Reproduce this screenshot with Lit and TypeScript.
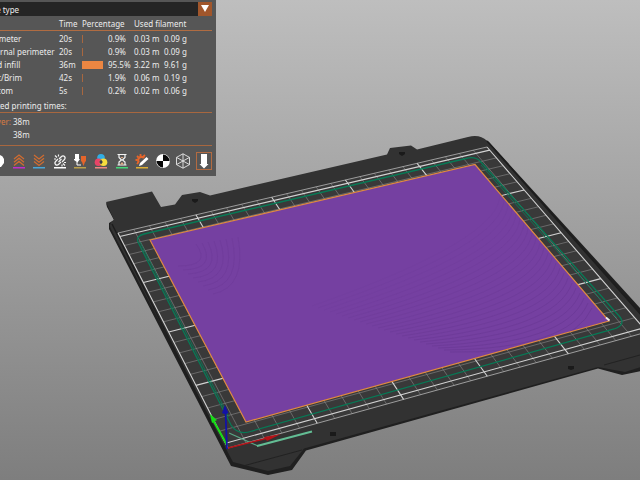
import { LitElement, css, html, svg } from "lit";
import { customElement, state } from "lit/decorators.js";

type Point = [number, number];

// Print bed in millimetres, projected on the 640 x 480 viewport of the scene.
const BED = { x0: 0, x1: 250, y0: -4, y1: 204 };

function project(x: number, y: number): Point {
  const u = (x - BED.x0) / (BED.x1 - BED.x0);
  const v = (y - BED.y0) / (BED.y1 - BED.y0);
  const [ax, ay] = [228, 448];
  const [bx, by] = [647, 332];
  const [cx, cy] = [487, 147];
  const [dx, dy] = [118, 233];
  const sx = ax - bx + cx - dx;
  const sy = ay - by + cy - dy;
  const den = (bx - cx) * (dy - cy) - (dx - cx) * (by - cy);
  const g = (sx * (dy - cy) - (dx - cx) * sy) / den;
  const h = ((bx - cx) * sy - sx * (by - cy)) / den;
  const w = 1 + g * u + h * v;
  return [
    (ax + (bx - ax + g * bx) * u + (dx - ax + h * dx) * v) / w,
    (ay + (by - ay + g * by) * u + (dy - ay + h * dy) * v) / w,
  ];
}

function segment(x0: number, y0: number, x1: number, y1: number): string {
  const a = project(x0, y0);
  const b = project(x1, y1);
  return `M${a[0].toFixed(1)} ${a[1].toFixed(1)}L${b[0].toFixed(1)} ${b[1].toFixed(1)}`;
}

function gridPaths() {
  let thin = "";
  let bold = "";
  for (let x = 0; x <= 250; x += 10) {
    const line = segment(x, BED.y0, x, BED.y1);
    if (x % 50 === 0) bold += line;
    else thin += line;
  }
  for (let y = 0; y <= 200; y += 10) {
    const line = segment(0, y, 250, y);
    if (y % 50 === 0) bold += line;
    else thin += line;
  }
  const outline = segment(0, BED.y1, 250, BED.y1) + segment(0, BED.y0, 250, BED.y0);
  return { thin, bold, outline };
}

@customElement("bed-scene")
class BedScene extends LitElement {
  static styles = css`
    :host { display: block; height: 100%; }
    .scene { display: block; width: 100%; height: 100%; }
  `;

  render() {
    const grid = gridPaths();
    const front = Array.from({ length: 24 }, (_, i) => i);
    const back = Array.from({ length: 8 }, (_, i) => i);
    return html`
      <svg class="scene" viewBox="0 0 640 480" preserveAspectRatio="xMidYMid slice" role="img" aria-label="Print bed">
        <defs>
          <linearGradient id="sky" x1="0" y1="0" x2="0" y2="1">
            <stop offset="0" stop-color="#bebebe" />
            <stop offset="1" stop-color="#7e7e7e" />
          </linearGradient>
          <clipPath id="part"><path d="M150 240L475 164.500L609 321L246 422Z" /></clipPath>
        </defs>
        <rect width="640" height="480" fill="url(#sky)" />
        <path fill="#202020" d="M106 203L107 207L114 220L109 223V229L231 466L268 475L292 470L306 450.500L598 368.500L622 375L660 367V330L489 142L484 139L300 300Z" />
        <path fill="#323232" d="M106 202L152 191.500L161 207L175 204.500L182 195L200 192L210 195.500L387 154.500L390 148L411 145.500L417 149.500L468 137Q480 134 487 141L660 336V361L625 372L598 367L304 448.500L290 466L268 471L233 462L111 229Q108 224 114 220Z" />
        <path fill="#393939" d="M118 233L487 147L647 332L228 448Z" />
        <path fill="none" stroke="#222" d="M243 466L302 450M604 365L640 355" />
        <path fill="none" stroke="#1e1e1e" stroke-width="1.500" d="M112 224L229 459M487 141L650 325" />
        <g fill="#1a1a1a">
          <path d="M192 199h6v2l-3 2-3-2zM399 152h6v2l-3 2-3-2zM330 432h6v4h-6zM568 366h6v3l-3 1-3-1z" />
        </g>
        <g fill="none">
          <path d=${grid.thin} stroke="#8a8a8a" stroke-width=".6" />
          <path d=${grid.outline} stroke="#a8a8a8" stroke-width=".9" />
          <path d=${grid.bold} stroke="#d2d2d2" stroke-width="1.100" />
          <path stroke="#077a56" stroke-width="1.300" d="M138 242Q136 236 144 234L466 158.500Q475 156 480 161L620 317Q626 325 614 329L252 431Q238 436 231 425Z" />
          <path stroke="#087b58" stroke-width=".9" d="M140 242L229 417M481 165L617 318" />
        </g>
        <path fill="#7540a1" d="M150 240L475 164.500L609 321L246 422Z" />
        <g fill="none" clip-path="url(#part)" stroke="#64348e" stroke-width=".8">
          ${front.map((i) => svg`<path opacity=${(0.6 - i * 0.022).toFixed(2)} d=${`M${450 - i * 6} ${352 - i * 2}Q${572 - i * 3} ${354 - i * 5} ${592 - i * 4} ${308 - i * 5}`} />`)}
          ${back.map((i) => svg`<path opacity=".3" d=${`M${178 + i * 5} ${266 + i * 4}Q${212 + i * 5} ${266 + i * 3} ${196 + i * 6} ${244 - i}`} />`)}
        </g>
        <path fill="none" stroke="#e08a42" stroke-width="1.200" d="M150 240L475 164.500L609 321L246 422Z" />
        <path stroke="#eee" stroke-width="1.800" d="M606 317.500L609.500 320.500" />
        <path fill="none" stroke="#58a685" stroke-width="1.200" d="M229 433L258 446" />
        <path fill="none" stroke="#63bd94" stroke-width="2.200" d="M257 446L312 431.500" />
        <path stroke="#b51217" stroke-width="1.500" d="M228 448L268 438" />
        <path fill="#b51217" d="M264 437L281 434L267 441Z" />
        <path stroke="#16dd16" stroke-width="2" d="M227 445L213 420" />
        <path fill="#16dd16" d="M210 414L217 420L212 423Z" />
        <path stroke="#1212a8" stroke-width="1.800" d="M227 449L225.500 412" />
        <path fill="#1212a8" d="M225 405L228.500 413Q225 415 222 413Z" />
      </svg>
    `;
  }
}

interface Feature {
  name: string;
  time: string;
  percent: number;
  length: string;
  weight: string;
}

const FEATURES: Feature[] = [
  { name: "Perimeter", time: "20s", percent: 0.9, length: "0.03 m", weight: "0.09 g" },
  { name: "External perimeter", time: "20s", percent: 0.9, length: "0.03 m", weight: "0.09 g" },
  { name: "Solid infill", time: "36m", percent: 95.5, length: "3.22 m", weight: "9.61 g" },
  { name: "Skirt/Brim", time: "42s", percent: 1.9, length: "0.06 m", weight: "0.19 g" },
  { name: "Custom", time: "5s", percent: 0.2, length: "0.02 m", weight: "0.06 g" },
];

const TOOLS = [
  { name: "Wipe", art: svg`<path fill="#d76a2f" d="M4 5h6v7H4z" /><path fill="#fff" d="M7 2q5-1 7 4v4l-3 4H9l1-5-3-3z" />` },
  { name: "Retractions", art: svg`<path fill="none" stroke="#cf6c31" stroke-width="1.300" d="M3 6l5-4 5 4M3 9.200l5-4 5 4M3 12.400l5-4 5 4" /><path fill="#c32dcb" d="M2 14h12v1.500H2z" />` },
  { name: "Deretractions", art: svg`<path fill="none" stroke="#cf6c31" stroke-width="1.300" d="M3 2l5 4 5-4M3 5.200l5 4 5-4M3 8.400l5 4 5-4" /><path fill="#4aa7d8" d="M2 14h12v1.500H2z" />` },
  { name: "Seams", art: svg`<g fill="none" stroke="#f4f4f4" stroke-width="1.200"><path d="M7 6l2-2q2-2 3.500-.5T12 7l-2 2M9 9l-2 2q-2 2-3.500.5T4 8l2-2M5 4.500L3 2.500M6.500 3.500v-2M4 6H2M11 10.500l2 2M10 11.500v2M12 9.500h2M6.500 9l3-3" /></g><path fill="#fff" d="M2 14h12v1.500H2z" />` },
  { name: "Tool changes", art: svg`<path fill="#fff" d="M3 1h4v5h1L5.500 9.500 2 7V6h1z" /><path fill="#e5652b" d="M9 3h5v5l-1 1-1.500 4L10 9 9 8z" /><path fill="none" stroke="#fff" d="M5 9v3h4" /><path fill="#bba04b" d="M2 14h12v1.500H2z" />` },
  { name: "Color changes", art: svg`<circle cx="8" cy="4.800" r="3.800" fill="#31aee5" /><circle cx="5.500" cy="9.200" r="3.800" fill="#e84468" /><circle cx="10.500" cy="9.200" r="3.800" fill="#f5dc3d" /><path fill="#3b3d49" d="M8 6.500L9.800 9 8 11.500 6.200 9z" /><path fill="#ee8881" d="M2 14h12v1.500H2z" />` },
  { name: "Pauses", art: svg`<path fill="none" stroke="#f4f4f4" stroke-width="1.200" d="M3.500 1.500h9M3.500 12h9M5 2v2.500L7.500 7 5 9v3M11 2v2.500L8.500 7 11 9v3" /><path fill="#e4ab84" d="M6 11.500l2-2.500 2 2.500zM6.500 4h3L8 5.500z" /><path fill="#43d878" d="M2 14h12v1.500H2z" />` },
  { name: "Custom G-codes", art: svg`<path fill="none" stroke="#e5652b" stroke-width="2.200" d="M5 9.500a3.200 3.200 0 1 1 5-4.500" /><path stroke="#e5652b" stroke-width="1.800" d="M6.500 3.500V1M9 4l2-2M4.500 4.500L3 3M3.500 7h-2M4.500 9L3 11" /><path fill="#fff" d="M12.500 4l2 2-6.500 6-3 1 1-3z" /><path fill="#dcae35" d="M2 14h12v1.500H2z" />` },
  { name: "Center of gravity", art: svg`<circle cx="8" cy="8" r="6.900" fill="#fff" /><path fill="#080808" d="M8 8V1.500A6.500 6.500 0 0 1 14.500 8zM8 8v6.500A6.500 6.500 0 0 1 1.500 8z" />` },
  { name: "Shells", art: svg`<path fill="none" stroke="#e8e8e8" stroke-width=".9" d="M8 .8l6.500 3.600v7.200L8 15.200 1.500 11.600V4.400zM8 .8V8M1.500 4.400L8 8l6.500-3.600M8 8v7.200M1.500 11.600L8 8l6.500 3.600" />` },
  { name: "Tool marker", art: svg`<path fill="#fff" d="M5 1h6v10h1.500L8 15.500 3.500 11H5z" />` },
];

@customElement("legend-panel")
class LegendPanel extends LitElement {
  static styles = css`
    :host {
      display: block;
      box-sizing: border-box;
      padding: 2px 4px 6px;
      background: #565656;
      color: #ececec;
      font: 8px/13px "Noto Sans", "Open Sans", sans-serif;
    }
    .view { display: flex; height: 14px; margin-bottom: 1px; background: #252525; }
    .view-select {
      flex: 1;
      appearance: none;
      border: 0;
      padding: 0;
      background: none;
      color: inherit;
      font: inherit;
    }
    .view-arrow { width: 14px; height: 14px; background: #a1562b; pointer-events: none; margin-left: -14px; }
    .features { width: 100%; table-layout: fixed; border-collapse: collapse; }
    .features th, .features td { padding: 0; height: 13px; text-align: left; font-weight: 400; white-space: nowrap; }
    .features thead tr { border-bottom: 1px solid #b06c42; }
    .features tbody th { padding-left: 12px; }
    .features tbody::before { content: ""; display: block; height: 1px; }
    .col-name { width: 87px; }
    .col-time { width: 23px; }
    .col-share { width: 52px; }
    .col-length { width: 30px; }
    .share { display: flex; align-items: center; }
    .track { width: 22px; margin-right: 4px; }
    .bar { height: 8px; min-width: 1px; background: #eb8642; }
    .bar.slim { background: #a8673f; }
    .caption { margin: 2px 0 0; border-bottom: 1px solid #a8673f; }
    .times { display: grid; grid-template-columns: 41px 1fr; margin: 2px 0; padding-bottom: 4px; border-bottom: 1px solid #a8673f; }
    .times dt { color: #d77b42; white-space: nowrap; }
    .times dd { margin: 0; }
    .tools { display: flex; justify-content: space-between; margin-top: 4px; padding-top: 2px; padding-left: 18px; }
    .tool { width: 16px; height: 18px; padding: 0; border: 1px solid transparent; background: none; }
    .tool.on { border-color: #b36b41; }
    .tool-art { display: block; width: 16px; height: 16px; margin-left: -1px; }
  `;

  @state() private active = "Tool marker";

  render() {
    return html`
      <div class="view">
        <select class="view-select" aria-label="View"><option>Feature type</option></select>
        <svg class="view-arrow" viewBox="0 0 14 14" aria-hidden="true"><path fill="#fff" d="M3 3h8l-4 7z" /></svg>
      </div>
      <table class="features">
        <colgroup>
          <col class="col-name" /><col class="col-time" /><col class="col-share" /><col class="col-length" /><col />
        </colgroup>
        <thead>
          <tr><th></th><th>Time</th><th>Percentage</th><th colspan="2">Used filament</th></tr>
        </thead>
        <tbody>
          ${FEATURES.map((f) => html`
            <tr>
              <th scope="row">${f.name}</th>
              <td>${f.time}</td>
              <td>
                <div class="share">
                  <div class="track">
                    <div class=${f.percent < 5 ? "bar slim" : "bar"} style="width:${f.percent}%"></div>
                  </div>
                  ${f.percent.toFixed(1)}%
                </div>
              </td>
              <td>${f.length}</td>
              <td>${f.weight}</td>
            </tr>
          `)}
        </tbody>
      </table>
      <p class="caption">Estimated printing times:</p>
      <dl class="times">
        <dt>First layer:</dt><dd>38m</dd>
        <dt>Total:</dt><dd>38m</dd>
      </dl>
      <div class="tools">
        ${TOOLS.map((t) => html`
          <button class=${t.name === this.active ? "tool on" : "tool"} aria-label=${t.name} @click=${() => (this.active = t.name)}>
            <svg class="tool-art" viewBox="0 0 16 16" aria-hidden="true">${t.art}</svg>
          </button>
        `)}
      </div>
    `;
  }
}

@customElement("app-root")
class AppRoot extends LitElement {
  static styles = css`
    :host { display: block; position: relative; height: 100vh; overflow: hidden; background: #999; }
    .legend { position: absolute; top: 0; left: -32px; width: 248px; }
  `;

  render() {
    return html`
      <bed-scene></bed-scene>
      <legend-panel class="legend"></legend-panel>
    `;
  }
}
